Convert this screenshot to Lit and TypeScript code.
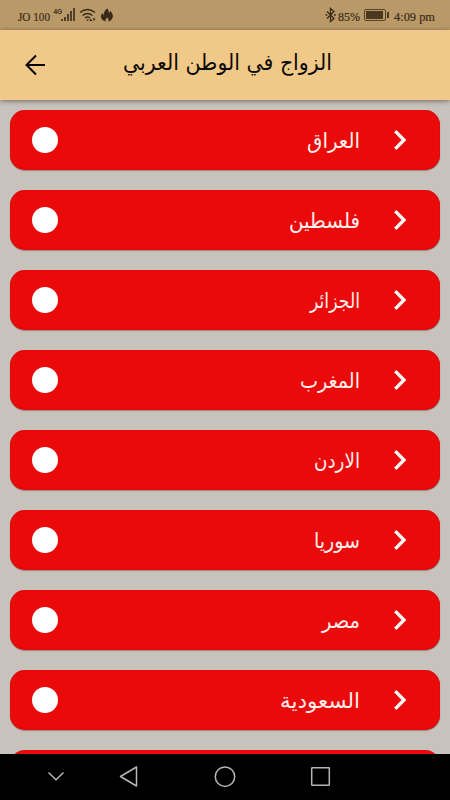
import { LitElement, html, css, svg } from "lit";
import { customElement, property } from "lit/decorators.js";

const countries: { name: string; width: number }[] = [
  { name: "العراق", width: 53 },
  { name: "فلسطين", width: 71 },
  { name: "الجزائر", width: 50 },
  { name: "المغرب", width: 60 },
  { name: "الاردن", width: 46 },
  { name: "سوريا", width: 46 },
  { name: "مصر", width: 38 },
  { name: "السعودية", width: 80 },
  { name: "", width: 0 },
];

const fitted = (text: string, x: number, y: number, width: number) => svg`
  <text x=${x} y=${y} textLength=${width} lengthAdjust="spacingAndGlyphs">${text}</text>`;

@customElement("status-bar")
class StatusBar extends LitElement {
  static styles = css`
    :host { display: block; height: 30px; background: #b99968; }
    svg { display: block; }
    text { font-family: "Liberation Serif", serif; font-size: 13.5px; fill: #392b18; stroke: #392b18; stroke-width: 0.2px; }
    .net { font-family: "Liberation Sans", sans-serif; font-size: 6.5px; font-weight: bold; stroke: none; }
  `;
  render() {
    return html`<svg width="450" height="30" viewBox="0 0 450 30">
      ${fitted("JO 100", 18, 20.5, 32)}
      <text class="net" x="53.500" y="13.5">4G</text>
      <path d="M62 21v-2M65 21v-4M68 21v-7M71 21v-10M74 21v-13" stroke="#392b18" stroke-width="1.6" />
      <g fill="none" stroke="#392b18" stroke-width="1.5">
        <path d="M80 12.5q7.500-6 15 0M82.500 15.500q5-4 10 0M85 18q2.500-1.800 5 0" />
      </g>
      <path d="M86 19.500l1.500 1.500 1.500-1.500zM90.500 18.500l2 2.500h-3zM94 21l-1.500-2.500h3z" fill="#392b18" />
      <path d="M107.500 8.500c1.200 1.300.8 3 1.600 4.200.9-.2 1-1 .9-1.900 2 1.800 3 3.700 2.900 5.800-.3 2.700-2.300 4.500-4.600 5 1-2-.2-3.300-1.200-4.200-1.400 1.200-2 2.500-1.400 4.200-2.700-.6-4.800-2.500-4.800-5 0-1.500.7-2.700 1.900-3.600 0 1 .3 1.700 1 1.800.2-2.600 1.200-5.300 3.700-6.300z" fill="#392b18" />
      <path d="M327 11.500l7 7-3.500 3v-13l3.500 3-7 7" fill="none" stroke="#392b18" stroke-width="1.300" />
      <path d="M325.500 14.200h1.800v1.600h-1.800zM334 14.200h1.800v1.600h-1.800z" fill="#392b18" />
      ${fitted("85%", 338, 20.5, 22)}
      <rect x="364.500" y="9.500" width="21" height="11" rx="1.500" fill="none" stroke="#584527" />
      <rect x="366" y="11" width="17" height="8" fill="#4b391f" />
      <rect x="387" y="12" width="2" height="6" fill="#4b391f" />
      ${fitted("4:09 pm", 394, 20.5, 41)}
    </svg>`;
  }
}

@customElement("title-bar")
class TitleBar extends LitElement {
  static styles = css`
    :host {
      display: block; height: 70px; background: #f0c988; position: relative; z-index: 1;
      box-shadow: 0 1px 5px rgba(0, 0, 0, 0.45);
    }
    svg { display: block; }
    text { font-family: "DejaVu Sans", sans-serif; font-size: 22px; fill: #0c0a07; }
  `;
  render() {
    return html`<svg width="450" height="70" viewBox="0 0 450 70">
      <path d="M45 35H27M36 25.500L26.500 35l9.500 9.500" fill="none" stroke="#080603" stroke-width="2" />
      ${fitted("الزواج في الوطن العربي", 123, 40, 209)}
    </svg>`;
  }
}

@customElement("country-row")
class CountryRow extends LitElement {
  @property() name = "";
  @property({ type: Number }) labelWidth = 50;
  static styles = css`
    :host {
      display: flex; align-items: center; flex: none; box-sizing: border-box; height: 60px;
      padding: 0 32px 0 22px; border-radius: 15px; background: #e90a09;
      box-shadow: 0 1px 1px rgba(70, 20, 20, 0.35), inset 0 0 1px #9f1010;
    }
    .dot { width: 26px; height: 26px; border-radius: 50%; background: #fff; }
    .label { margin-left: auto; margin-right: 32px; display: block; overflow: visible; }
    text { font-family: "DejaVu Sans", sans-serif; font-size: 21px; fill: #fff0ee; }
    .chevron { display: block; }
  `;
  render() {
    const w = this.labelWidth;
    return html`<span class="dot"></span>
      <svg class="label" width=${w} height="60">${this.name ? fitted(this.name, 0, 38, w) : ""}</svg>
      <svg class="chevron" width="16" height="24" viewBox="0 0 16 24">
        <path d="M3.200 3.200L12 12l-8.800 8.800" fill="none" stroke="#fff" stroke-width="3.300" />
      </svg>`;
  }
}

@customElement("nav-bar")
class NavBar extends LitElement {
  static styles = css`
    :host { display: block; height: 46.500px; background: #000; }
    svg { display: block; }
  `;
  render() {
    return html`<svg width="450" height="46" viewBox="0 754 450 46" fill="none" stroke="#b5b5b5" stroke-width="1.500">
      <path d="M48.500 772.500l7.500 7.300 7.500-7.300" />
      <path d="M136.500 767v19L120.500 776.500z" stroke-linejoin="round" />
      <circle cx="225" cy="776.700" r="9.700" />
      <rect x="311.700" y="767.700" width="17.600" height="17.600" rx=".5" />
    </svg>`;
  }
}

@customElement("app-root")
class AppRoot extends LitElement {
  static styles = css`
    :host { display: flex; flex-direction: column; width: 450px; height: 800px; overflow: hidden; background: #c8c2bc; }
    .list { flex: 1; min-height: 0; overflow: hidden; display: flex; flex-direction: column; gap: 20px; padding: 10px 10px 0; }
  `;
  render() {
    return html`<status-bar></status-bar>
      <title-bar></title-bar>
      <main class="list">
        ${countries.map((c) => html`<country-row .name=${c.name} .labelWidth=${c.width}></country-row>`)}
      </main>
      <nav-bar></nav-bar>`;
  }
}
